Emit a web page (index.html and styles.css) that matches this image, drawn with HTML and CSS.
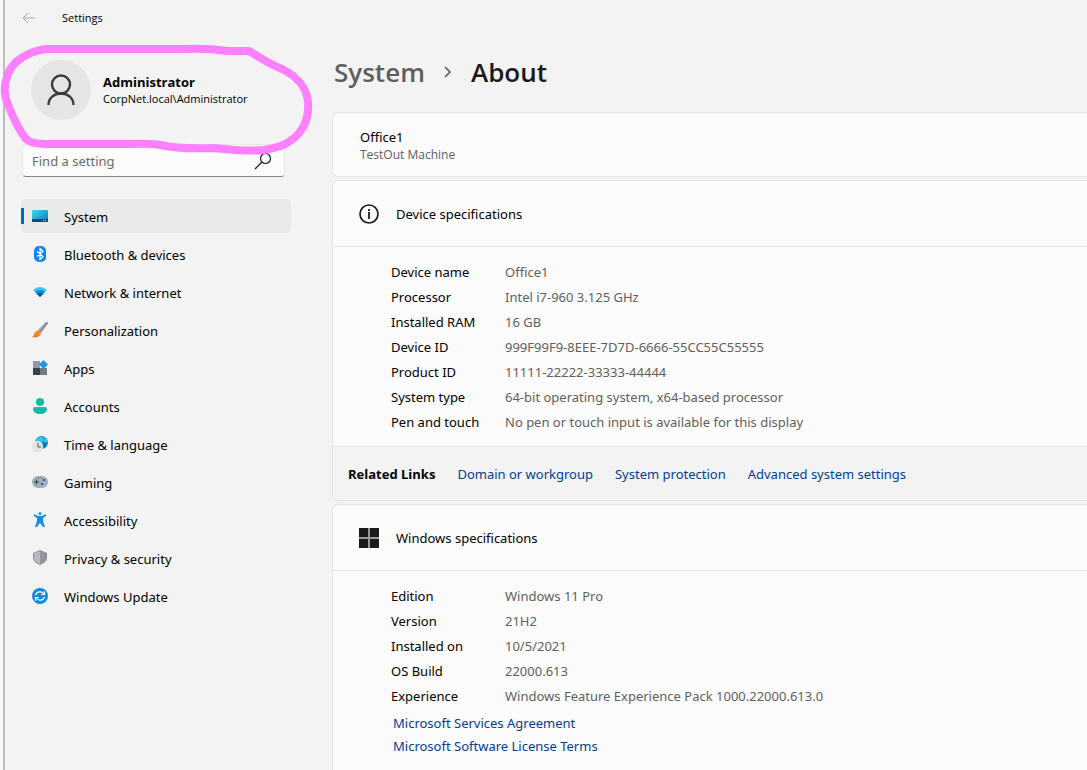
FILE: index.html
```html
<!DOCTYPE html>
<html lang="en">
<head>
  <meta charset="UTF-8">
  <meta name="viewport" content="width=device-width, initial-scale=1.0">
  <title>Settings</title>
  <link rel="stylesheet" href="styles.css">
</head>
<body>
  <div class="window">
    <aside class="sidebar">
      <header class="titlebar">
        <button class="back" aria-label="Back">
          <svg width="14" height="12" viewBox="0 0 14 12" fill="none" stroke="#a6a6a6"><path d="M13.500 6H1M6 1L1 6l5 5"/></svg>
        </button>
        <span>Settings</span>
      </header>

      <div class="profile">
        <div class="avatar">
          <svg width="28" height="32" viewBox="0 0 28 32" fill="none" stroke="#3c3c3c" stroke-width="2.4"><circle cx="14" cy="10.5" r="9"/><path d="M1.500 31c0-7 5.500-11.500 12.500-11.500S26.500 24 26.500 31"/></svg>
        </div>
        <div>
          <div class="name">Administrator</div>
          <div class="account">CorpNet.local\Administrator</div>
        </div>
        <svg class="marker" width="314" height="116" viewBox="0 0 314 116" fill="none" stroke="#ff80ff" stroke-width="8" stroke-linejoin="round"><path d="M46 9H185C205 8 214 9 228 11H249C262 19 269 24 282 29C298 37 307 49 308 62C309 76 306 88 294 98C285 106 278 107 264 110C245 112 228 109 214 108C190 109 174 108 160 105C148 103 140 104 130 104H45C36 104 30 103 26 99C18 89 13 77 9 67C3 54 4 45 8 34C13 20 30 11 46 9Z"/></svg>
      </div>

      <div class="search">
        <input type="text" placeholder="Find a setting" aria-label="Find a setting">
        <svg width="18" height="18" viewBox="0 0 18 18" fill="none" stroke="#222" stroke-width="1.2"><circle cx="11.5" cy="6.5" r="5"/><path d="M8 10L1 17"/></svg>
      </div>

      <nav class="menu">
        <a href="#" class="active">
          <svg width="16" height="16" viewBox="0 0 16 16">
            <defs><linearGradient id="screen" x2="1" y2="1"><stop stop-color="#38dbea"/><stop offset="1" stop-color="#1272c4"/></linearGradient></defs>
            <rect y="2" width="16" height="12" rx="1" fill="url(#screen)"/><path d="M0 11h16v2a1 1 0 0 1-1 1H1a1 1 0 0 1-1-1z" fill="#104b70"/><path d="M11 12h1v1h-1zM13 12h1v1h-1z" fill="#b8e5f4"/>
          </svg>
          System
        </a>
        <a href="#">
          <svg width="16" height="16" viewBox="0 0 16 16"><rect x="2" width="12" height="16" rx="5" fill="#0a84ff"/><path d="M5 5.500l6 5-3 3v-11l3 3-6 5" fill="none" stroke="#fff" stroke-width="1.2"/></svg>
          Bluetooth &amp; devices
        </a>
        <a href="#">
          <svg width="16" height="16" viewBox="0 0 16 16"><path d="M1 6Q8 0 15 6L8 13z" fill="#37c5f2"/><path d="M3 8q5-4 10 0l-5 5z" fill="#168bd2"/><path d="M5 10q3-2 6 0l-3 3z" fill="#0753a5"/></svg>
          Network &amp; internet
        </a>
        <a href="#">
          <svg width="16" height="16" viewBox="0 0 16 16"><path d="M14 0q2-.5 2 1.500L9 11 6 8z" fill="#8b929b"/><path d="M13 1L7 8" stroke="#bbc1c8"/><path d="M5.500 8.500q3 0 3.500 3Q7 16 0 15q2-1 2-3 1-3 3.500-3.500z" fill="#f58a20"/><path d="M1 15q5 0 6-3-1 4-6 3z" fill="#d94b13"/></svg>
          Personalization
        </a>
        <a href="#">
          <svg width="16" height="16" viewBox="0 0 16 16"><path d="M1 1h7v7H1z" fill="#929aa5"/><path d="M1 8h7v7H1z" fill="#3e434a"/><path d="M8 8h7v7H8z" fill="#747a82"/><path d="M11.500 0L16 4.500 11.500 9 7 4.500z" fill="#1698ed"/></svg>
          Apps
        </a>
        <a href="#">
          <svg width="16" height="16" viewBox="0 0 16 16" fill="#18b8a2"><circle cx="8" cy="4" r="4"/><path d="M3 9h10q2 0 2 2c0 3-3 5-7 5s-7-2-7-5q0-2 2-2z"/></svg>
          Accounts
        </a>
        <a href="#">
          <svg width="16" height="16" viewBox="0 0 16 16"><circle cx="9.5" cy="6.5" r="6.5" fill="#138ed0"/><path d="M4 4q3-4 7-3v5H3zM12 1q3 2 4 5h-4z" fill="#32cbe8"/><path d="M11 7h4q0 3-3 5z" fill="#0874b8"/><circle cx="5.5" cy="10.5" r="5.5" fill="#e1e3e5"/><path d="M6 7v4h3" fill="none" stroke="#555"/></svg>
          Time &amp; language
        </a>
        <a href="#">
          <svg width="16" height="16" viewBox="0 0 16 16"><rect y="2" width="16" height="12" rx="6" fill="#a5adb5"/><path d="M2 8h5M4.500 5.500v5" stroke="#333b44"/><path d="M6 4h1M9 4h1" stroke="#555"/><path d="M11 5h2v2h-2zM9 9h2v2H9z" fill="#0868b9"/></svg>
          Gaming
        </a>
        <a href="#">
          <svg width="16" height="16" viewBox="0 0 16 16" fill="#168fdf"><circle cx="8" cy="1.5" r="1.5"/><path d="M2 2l4 2h4l4-2v2l-3 2v3l2 6h-2L8 11l-3 4H3l2-6V6L2 4z"/></svg>
          Accessibility
        </a>
        <a href="#">
          <svg width="16" height="16" viewBox="0 0 16 16"><path d="M8 0l7 3v5c0 3-3 5-7 7-4-2-7-4-7-7V3z" fill="#858b92"/><path d="M8 1v13c-3-1-6-3-6-6V3z" fill="#b4b9bd"/><path d="M8 1l6 2v5c0 3-3 5-6 6z" fill="#92979d"/></svg>
          Privacy &amp; security
        </a>
        <a href="#">
          <svg width="16" height="16" viewBox="0 0 16 16"><circle cx="8" cy="8" r="8" fill="#128bdc"/><path d="M3.500 7C5 3 10 3 12 6M12.500 3v3.500H9M12.500 9C11 13 6 13 4 10M3.500 13V9.500H7" fill="none" stroke="#fff" stroke-width="1.2"/></svg>
          Windows Update
        </a>
      </nav>
    </aside>

    <main class="content">
      <h1 class="breadcrumb">
        <a href="#">System</a>
        <svg width="8" height="12" viewBox="0 0 8 12" fill="none" stroke="#5f5f5f" stroke-width="1.7"><path d="M1 1l5 5-5 5"/></svg>
        <span>About</span>
      </h1>

      <section class="card machine">
        <div class="machine-name">Office1</div>
        <div class="machine-model">TestOut Machine</div>
      </section>

      <section class="card">
        <h2 class="card-header">
          <svg width="20" height="20" viewBox="0 0 20 20"><circle cx="10" cy="10" r="9" fill="none" stroke="#1a1a1a" stroke-width="1.7"/><path d="M9 8h2v7H9zM9 5h2v2H9z" fill="#333"/></svg>
          Device specifications
        </h2>
        <table class="specs">
          <tr><th>Device name</th><td>Office1</td></tr>
          <tr><th>Processor</th><td>Intel i7-960 3.125 GHz</td></tr>
          <tr><th>Installed RAM</th><td>16 GB</td></tr>
          <tr><th>Device ID</th><td>999F99F9-8EEE-7D7D-6666-55CC55C55555</td></tr>
          <tr><th>Product ID</th><td>11111-22222-33333-44444</td></tr>
          <tr><th>System type</th><td>64-bit operating system, x64-based processor</td></tr>
          <tr><th>Pen and touch</th><td>No pen or touch input is available for this display</td></tr>
        </table>
        <div class="related">
          <strong>Related Links</strong>
          <a href="#">Domain or workgroup</a>
          <a href="#">System protection</a>
          <a href="#">Advanced system settings</a>
        </div>
      </section>

      <section class="card last">
        <h2 class="card-header">
          <svg width="20" height="20" viewBox="0 0 20 20"><path d="M0 0h20v20H0z" fill="#999"/><path d="M0 0h9v9H0zM11 0h9v9h-9zM0 11h9v9H0zM11 11h9v9h-9z" fill="#1a1a1a"/></svg>
          Windows specifications
        </h2>
        <table class="specs">
          <tr><th>Edition</th><td>Windows 11 Pro</td></tr>
          <tr><th>Version</th><td>21H2</td></tr>
          <tr><th>Installed on</th><td>10/5/2021</td></tr>
          <tr><th>OS Build</th><td>22000.613</td></tr>
          <tr><th>Experience</th><td>Windows Feature Experience Pack 1000.22000.613.0</td></tr>
        </table>
        <div class="terms">
          <a href="#">Microsoft Services Agreement</a>
          <a href="#">Microsoft Software License Terms</a>
        </div>
      </section>
    </main>
  </div>
</body>
</html>
```
FILE: styles.css
```css
* {
  box-sizing: border-box;
}

body {
  margin: 0;
  padding-left: 3px;
  background-color: #f7f7f7;
  color: #000;
  font-family: "Noto Sans", "Open Sans", sans-serif;
  font-size: 13px;
  line-height: 18px;
}

a {
  color: #003e92;
  text-decoration: none;
}

.window {
  display: flex;
  min-height: 100vh;
  border-left: 2px solid #bdbdbd;
  background-color: #f3f3f3;
}

.sidebar {
  flex: 0 0 327px;
  padding: 0 41px 0 16px;
}

.titlebar {
  display: flex;
  align-items: center;
  gap: 26px;
  height: 36px;
  padding-left: 1px;
  font-family: "Open Sans", sans-serif;
  font-size: 11px;
}

.back {
  display: flex;
  padding: 0;
  border: none;
  background: none;
}

.profile {
  position: relative;
  display: flex;
  align-items: center;
  gap: 12px;
  height: 108px;
  padding-left: 10px;
  font-family: "Open Sans", sans-serif;
}

.avatar {
  display: flex;
  align-items: center;
  justify-content: center;
  width: 60px;
  height: 60px;
  border-radius: 50%;
  background-color: #e5e5e5;
}

.name {
  font-weight: 700;
}

.account {
  font-size: 11px;
  line-height: 16px;
}

/* highlight drawn round the signed-in account */
.marker {
  position: absolute;
  top: 4px;
  left: -21px;
  z-index: 1;
}

.search {
  display: flex;
  align-items: center;
  width: 263px;
  height: 33px;
  margin-left: 1px;
  padding: 0 12px 0 9px;
  border: 1px solid #e5e5e5;
  border-bottom-color: #868686;
  border-radius: 4px;
  background-color: #fbfbfb;
}

.search input {
  flex: 1;
  min-width: 0;
  padding: 0;
  border: none;
  outline: none;
  background: none;
  font: inherit;
}

.search input::placeholder {
  color: #6b6b6b;
}

.menu {
  display: flex;
  flex-direction: column;
  gap: 4px;
  margin-top: 22px;
}

.menu a {
  display: flex;
  align-items: center;
  gap: 16px;
  height: 34px;
  padding: 2px 11px 0;
  border-radius: 5px;
  color: #000;
}

.menu svg {
  margin-bottom: 2px;
}

.menu .active {
  background: linear-gradient(#0067c0, #0067c0) 0 9px / 3px 16px no-repeat #eaeaea;
}

.content {
  display: flex;
  flex: 1;
  flex-direction: column;
  gap: 3px;
  min-width: 0;
}

.breadcrumb {
  display: flex;
  align-items: center;
  gap: 19px;
  height: 75px;
  margin: 34px 0 0;
  padding-left: 2px;
  font-family: "Open Sans", sans-serif;
  font-size: 26px;
  font-weight: 600;
  line-height: 36px;
  color: #1a1a1a;
}

.breadcrumb a {
  color: #5f5f5f;
}

.card {
  border: 1px solid #e5e5e5;
  border-right: none;
  border-radius: 6px 0 0 6px;
  background-color: #fbfbfb;
}

.machine {
  padding: 15px 27px 12px;
}

.machine-model {
  color: #606060;
  font-family: "Open Sans", sans-serif;
  font-size: 12px;
}

.card-header {
  display: flex;
  align-items: center;
  gap: 17px;
  height: 66px;
  margin: 0;
  padding: 0 26px;
  border-bottom: 1px solid #e5e5e5;
  font-size: 13px;
  font-weight: 400;
}

.specs {
  margin: 12px 0 12px 58px;
  border-collapse: collapse;
}

.specs th {
  width: 114px;
  height: 25px;
  padding: 0;
  font-weight: 400;
  text-align: left;
}

.specs td {
  padding: 0;
  color: #606060;
}

.related {
  display: flex;
  align-items: center;
  gap: 22px;
  height: 54px;
  padding: 0 15px;
  border-top: 1px solid #e5e5e5;
  border-bottom-left-radius: 6px;
  background-color: #f3f3f3;
}

.related strong {
  font-family: "Open Sans", sans-serif;
}

.last {
  flex: 1;
  border-bottom: none;
  border-bottom-left-radius: 0;
}

.last .specs {
  margin-bottom: 6px;
}

.terms {
  display: flex;
  flex-direction: column;
  align-items: flex-start;
  gap: 5px;
  padding-left: 60px;
}
```
